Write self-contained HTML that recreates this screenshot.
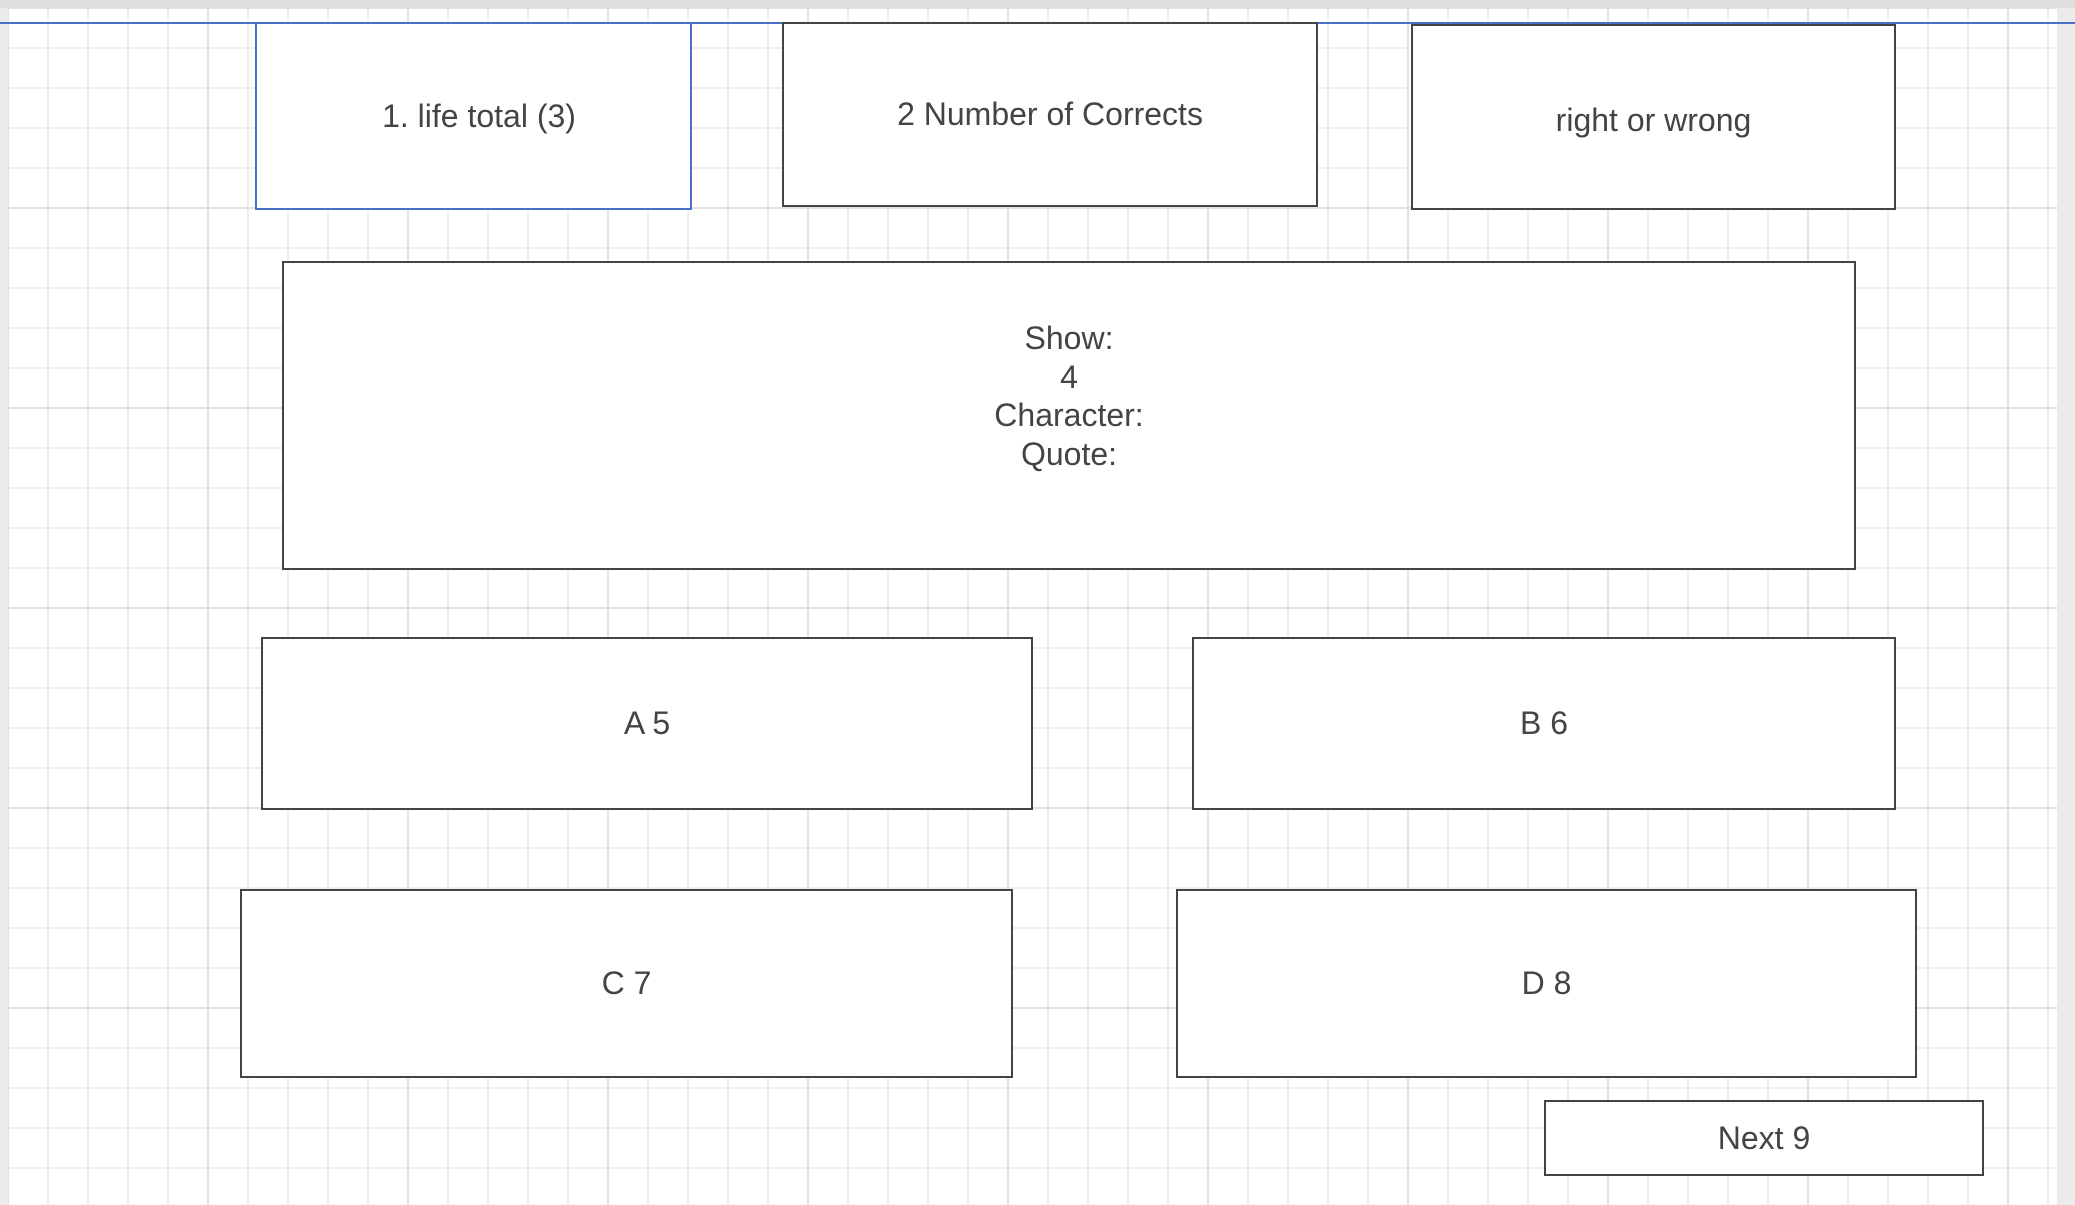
<!DOCTYPE html>
<html><head><meta charset="utf-8"><style>
html,body{margin:0;padding:0;}
body{width:2075px;height:1205px;position:relative;overflow:hidden;background:#ebebeb;font-family:"Liberation Sans",sans-serif;color:#444;}
#top{position:absolute;left:0;top:0;width:2075px;height:8px;background:#dedede;}
#canvas{position:absolute;left:8px;top:8px;width:2049px;height:1197px;background-color:#fff;
background-image:
linear-gradient(to right,#e2e2e2 2px,transparent 2px),
linear-gradient(to bottom,#e2e2e2 2px,transparent 2px),
linear-gradient(to right,#eeeeee 2px,transparent 2px),
linear-gradient(to bottom,#eeeeee 2px,transparent 2px);
background-size:200px 200px,200px 200px,40px 40px,40px 40px;
background-position:-1px -1px;}
#hl{position:absolute;left:0;top:22px;width:2075px;height:2px;background:#4a6fc7;}
.b{position:absolute;box-sizing:border-box;border:2px solid #444;background:#fff;display:flex;align-items:center;justify-content:center;font-size:32px;text-align:center;}
</style></head><body>
<div id="top"></div>
<div id="canvas"></div>
<div id="hl"></div>
<div class="b" style="left:255px;top:22px;width:437px;height:188px;border-color:#4a6fc7;padding-left:11px;">1. life total (3)</div>
<div class="b" style="left:782px;top:22px;width:536px;height:185px;">2 Number of Corrects</div>
<div class="b" style="left:1411px;top:24px;width:485px;height:186px;padding-top:6px;">right or wrong</div>
<div class="b" style="left:282px;top:261px;width:1574px;height:309px;align-items:flex-start;"><div style="margin-top:56px;line-height:38.5px;">Show:<br>4<br>Character:<br>Quote:</div></div>
<div class="b" style="left:261px;top:637px;width:772px;height:173px;">A 5</div>
<div class="b" style="left:1192px;top:637px;width:704px;height:173px;">B 6</div>
<div class="b" style="left:240px;top:889px;width:773px;height:189px;">C 7</div>
<div class="b" style="left:1176px;top:889px;width:741px;height:189px;">D 8</div>
<div class="b" style="left:1544px;top:1100px;width:440px;height:76px;">Next 9</div>
</body></html>
